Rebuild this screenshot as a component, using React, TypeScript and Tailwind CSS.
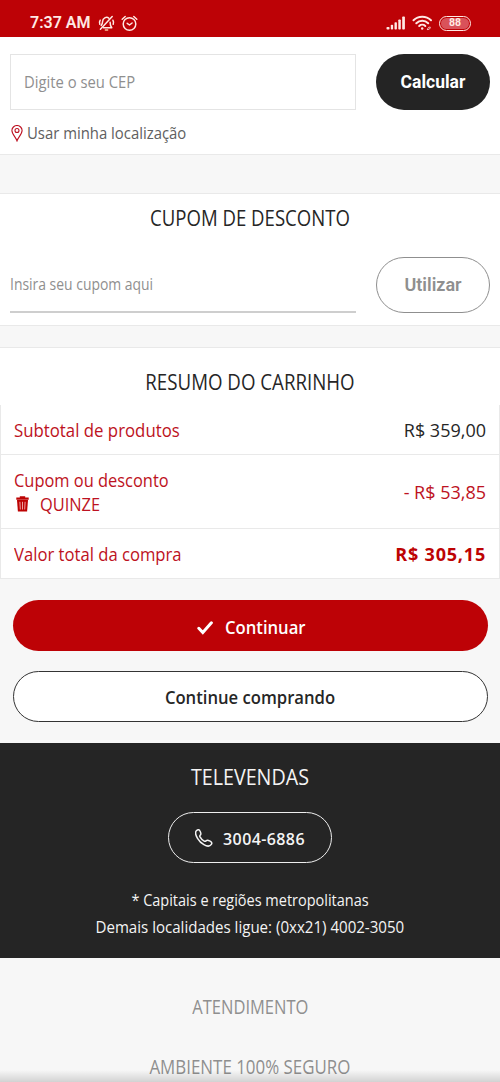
import type { ReactNode } from "react";

function MutedBellIcon() {
  return (
    <svg className="size-[17px]" viewBox="0 0 17 17" fill="none" stroke="currentColor" strokeWidth="1.5" strokeLinecap="round" strokeLinejoin="round">
      <path d="M14.2 1.5 2.4 14.3" />
      <path d="M10.9 3.2C9.900 2.300 8.200 2.100 6.800 2.800 5.200 3.600 4.600 5 4.600 6.600c0 1.700-.5 2.700-1.400 3.900" />
      <path d="M5.400 12.800h8.400c-1.300-1.400-1.700-3.200-1.700-5.600" />
      <path d="M7.400 14.900h2.200" stroke="#ffc9a0" />
      <path d="M2.200 5.200C1.300 6.600 1.300 8 1.800 9.300M14.900 5.200c.8 1.400.8 2.800.3 4.100" />
    </svg>
  );
}

function AlarmIcon() {
  return (
    <svg className="size-[17px]" viewBox="0 0 17 17" fill="none" stroke="currentColor" strokeWidth="1.500" strokeLinecap="round" strokeLinejoin="round">
      <circle cx="8.500" cy="9" r="6.300" />
      <path d="M1.200 4.200 4.200 1.500M15.800 4.200l-3-2.700M6.200 8.300l2.300 1.700 2.600-2" />
    </svg>
  );
}

function SignalIcon() {
  return (
    <svg className="h-[14px] w-[20px]" viewBox="0 0 20 14" fill="currentColor">
      <rect x="0.500" y="11" width="3" height="2.500" rx="0.800" />
      <rect x="4.800" y="8.800" width="2.300" height="4.700" rx="0.800" />
      <rect x="8.500" y="6.200" width="2.400" height="7.300" rx="0.800" />
      <rect x="12.300" y="3.500" width="2.500" height="10" rx="0.800" />
      <rect x="16.200" y="0.500" width="2.700" height="13" rx="0.800" />
    </svg>
  );
}

function WifiIcon() {
  return (
    <svg className="h-[16px] w-[21px]" viewBox="0 0 21 16" fill="none" stroke="currentColor" strokeWidth="2" strokeLinecap="round">
      <path d="M1.500 5.200c4.800-4.700 12.700-4.700 17.500 0M4.300 8.200c3.300-3.200 8.600-3.200 11.900 0M7.200 11c1.700-1.600 4.400-1.600 6.100 0" />
      <circle cx="10.200" cy="13.500" r="1.200" fill="currentColor" stroke="none" />
      <path d="M15.800 14.600v-1.200c0-.8 1-1.300 2.500-1.300-.1 1.600-.9 2.500-2.500 2.500Z" strokeWidth="0.800" />
    </svg>
  );
}

function PinIcon() {
  return (
    <svg className="h-[17px] w-[12px] text-[#bd1222]" viewBox="0 0 12 17" fill="none" stroke="currentColor" strokeWidth="1.100">
      <path d="M6 15.800C5 12.600.9 9 .9 5.600a5.100 5.100 0 0 1 10.200 0C11.100 9 7 12.600 6 15.800Z" />
      <circle cx="6" cy="5.500" r="2" />
    </svg>
  );
}

function TrashIcon() {
  return (
    <svg className="h-[16px] w-[13px] text-[#bd0303]" viewBox="0 0 13 16">
      <path d="M3.800 1.500V.3h5.400v1.200h3.500v2.200H.3V1.500Z" fill="currentColor" />
      <path d="M1 4h11l-.9 11.600H1.900Z" fill="currentColor" />
      <path d="m3.900 5.800.4 7.700M6.500 5.800v7.700M9.100 5.800l-.4 7.700" stroke="#f3b5b5" strokeWidth="0.900" />
    </svg>
  );
}

function CheckIcon() {
  return (
    <svg className="h-[14px] w-[16px] shrink-0" viewBox="0 0 16 14" fill="none" stroke="currentColor" strokeWidth="3">
      <path d="m1.800 7.300 4 4.200 8.600-9.700" strokeLinecap="round" />
    </svg>
  );
}

function PhoneIcon() {
  return (
    <svg className="size-[18px] shrink-0" viewBox="0 0 18 18" fill="none" stroke="currentColor" strokeWidth="1.500" strokeLinejoin="round">
      <path d="M1.600 1.500C2.900.4 4.400.7 5 2c.7 1.400 1.300 2.900.6 3.700-.8.900-1.200 1.100-.6 2.200.9 1.700 2.500 3.300 4.200 4.200 1.100.6 1.300.2 2.200-.5.900-.7 2.300-.1 3.700.6 1.400.7 2.200 2 1.300 3.200-1.600 2.200-4.800 1.900-7.500.3-2.700-1.600-4.800-3.700-6.400-6.400C.9 6.600-.2 3.100 1.600 1.500Z" />
    </svg>
  );
}

function Title({ children, className }: { children: ReactNode; className: string }) {
  return <h2 className={`text-center text-[22px] leading-6 font-normal whitespace-nowrap ${className}`}>{children}</h2>;
}

function Label({ children, className }: { children: ReactNode; className: string }) {
  return <span className={`block origin-left whitespace-nowrap ${className}`}>{children}</span>;
}

function StatusBar() {
  return (
    <header className="flex h-[37px] shrink-0 items-center bg-[#bd0206] pt-[9px] pr-[29px] pl-[30px] text-[#ffe9e4]">
      <span className="w-[61px] font-[Roboto,sans-serif] text-[16px] leading-5 font-semibold whitespace-nowrap">7:37 AM</span>
      <span className="ml-[7px]"><MutedBellIcon /></span>
      <span className="ml-[6px]"><AlarmIcon /></span>
      <span className="ml-auto"><SignalIcon /></span>
      <span className="ml-[6px]"><WifiIcon /></span>
      <span className="ml-[6px] flex h-[15px] w-[32px] items-center justify-center rounded-full border-[1.500px] border-current p-px">
        <span className="flex h-full w-full items-center justify-center rounded-full bg-[#d9525a] font-[Roboto,sans-serif] text-[10.500px] leading-none font-bold">88</span>
      </span>
    </header>
  );
}

export default function App() {
  return (
    <div className="relative flex h-[1082px] w-[500px] flex-col overflow-hidden bg-[#f7f7f7] font-['Open_Sans','Noto_Sans',sans-serif] text-[#262626]">
      <StatusBar />

      <section className="h-[118px] shrink-0 border-b border-[#e9e9e9] bg-white px-[10px] pt-[17px]">
        <div className="flex gap-5">
          <div className="flex h-14 w-[346px] items-center border border-[#e4e4e4] pl-[13px] text-[16px] text-[#8f8f8f]">
            <Label className="scale-x-[0.925]">Digite o seu CEP</Label>
          </div>
          <button className="h-14 w-[114px] rounded-full bg-[#242424] font-[Roboto,sans-serif] text-[17.500px] font-bold text-white">Calcular</button>
        </div>
        <div className="mt-[11px] flex h-6 items-center gap-1 pl-px text-[16px] text-[#606060]">
          <PinIcon />
          <Label className="scale-x-[0.93]">Usar minha localização</Label>
        </div>
      </section>

      <section className="mt-[38px] h-[133px] shrink-0 border-y border-[#e9e9e9] bg-white px-[10px] pt-[11px]">
        <Title className="scale-x-[0.845]">CUPOM DE DESCONTO</Title>
        <div className="mt-[28px] flex gap-5">
          <div className="flex h-[56px] w-[346px] items-center border-b-2 border-[#cecece] text-[16px] text-[#8f8f8f]">
            <Label className="scale-x-[0.87]">Insira seu cupom aqui</Label>
          </div>
          <button className="h-14 w-[114px] rounded-full border border-[#8f8f8f] pb-0.5 font-[Roboto,sans-serif] text-[18px] font-semibold text-[#8f8f8f]">Utilizar</button>
        </div>
      </section>

      <section className="mt-[21px] h-[232px] shrink-0 border-y border-[#e9e9e9] bg-white pt-[21px] text-[18px] leading-6 whitespace-nowrap">
        <Title className="scale-x-[0.85]">RESUMO DO CARRINHO</Title>
        <div className="mt-3 border-x border-[#e9e9e9]">
          <div className="flex h-[50px] items-center justify-between border-b border-[#e9e9e9] px-[13px]">
            <Label className="scale-x-[0.933] text-[#bd1222]">Subtotal de produtos</Label>
            <span>R$ 359,00</span>
          </div>
          <div className="flex h-[74px] items-center justify-between border-b border-[#e9e9e9] px-[13px] text-[#bd1222]">
            <div>
              <Label className="scale-x-[0.912]">Cupom ou desconto</Label>
              <div className="flex items-center gap-[11px] pl-[2px]">
                <TrashIcon />
                <Label className="scale-x-[0.91]">QUINZE</Label>
              </div>
            </div>
            <span>- R$ 53,85</span>
          </div>
          <div className="flex h-[49px] items-center justify-between px-[13px]">
            <Label className="scale-x-[0.925] text-[#bd1222]">Valor total da compra</Label>
            <span className="font-bold tracking-[0.800px] text-[#bd0303]">R$ 305,15</span>
          </div>
        </div>
      </section>

      <div className="flex shrink-0 flex-col gap-5 pt-[21px] pr-3 pb-[21px] pl-[13px] text-[18px] font-semibold">
        <button className="flex h-[51px] items-center justify-center gap-3 rounded-full bg-[#bd0206] pt-1 text-white">
          <CheckIcon />
          <span className="w-[80px]"><Label className="scale-x-[0.925]">Continuar</Label></span>
        </button>
        <button className="flex h-[51px] items-center justify-center rounded-full border-[1.500px] border-[#343434] bg-white pt-0.5">
          <span className="scale-x-[0.925] whitespace-nowrap">Continue comprando</span>
        </button>
      </div>

      <section className="flex h-[215px] shrink-0 flex-col items-center bg-[#252525] pt-[21px] text-[#f4f4f4]">
        <Title className="scale-x-[0.895]">TELEVENDAS</Title>
        <button className="mt-6 flex h-[51px] w-[164px] items-center justify-center gap-[10px] rounded-full border-[1.500px] border-[#eee] text-[16px] font-semibold tracking-[0.400px]">
          <PhoneIcon />
          <span className="pt-[3px]">3004-6886</span>
        </button>
        <p className="mt-[23px] scale-x-[0.905] text-[16px] leading-7 whitespace-nowrap">* Capitais e regiões metropolitanas</p>
        <p className="-mt-px scale-x-[0.942] text-[16px] leading-7 whitespace-nowrap">Demais localidades ligue: (0xx21) 4002-3050</p>
      </section>

      <div className="flex shrink-0 flex-col items-center gap-9 pt-[37px] text-[20px] leading-6 whitespace-nowrap text-[#8f8f8f]">
        <span className="scale-x-[0.825]">ATENDIMENTO</span>
        <span className="scale-x-[0.845]">AMBIENTE 100% SEGURO</span>
      </div>
      <div className="absolute inset-x-0 bottom-0 h-3 bg-linear-to-b from-transparent to-black/15" />
    </div>
  );
}
